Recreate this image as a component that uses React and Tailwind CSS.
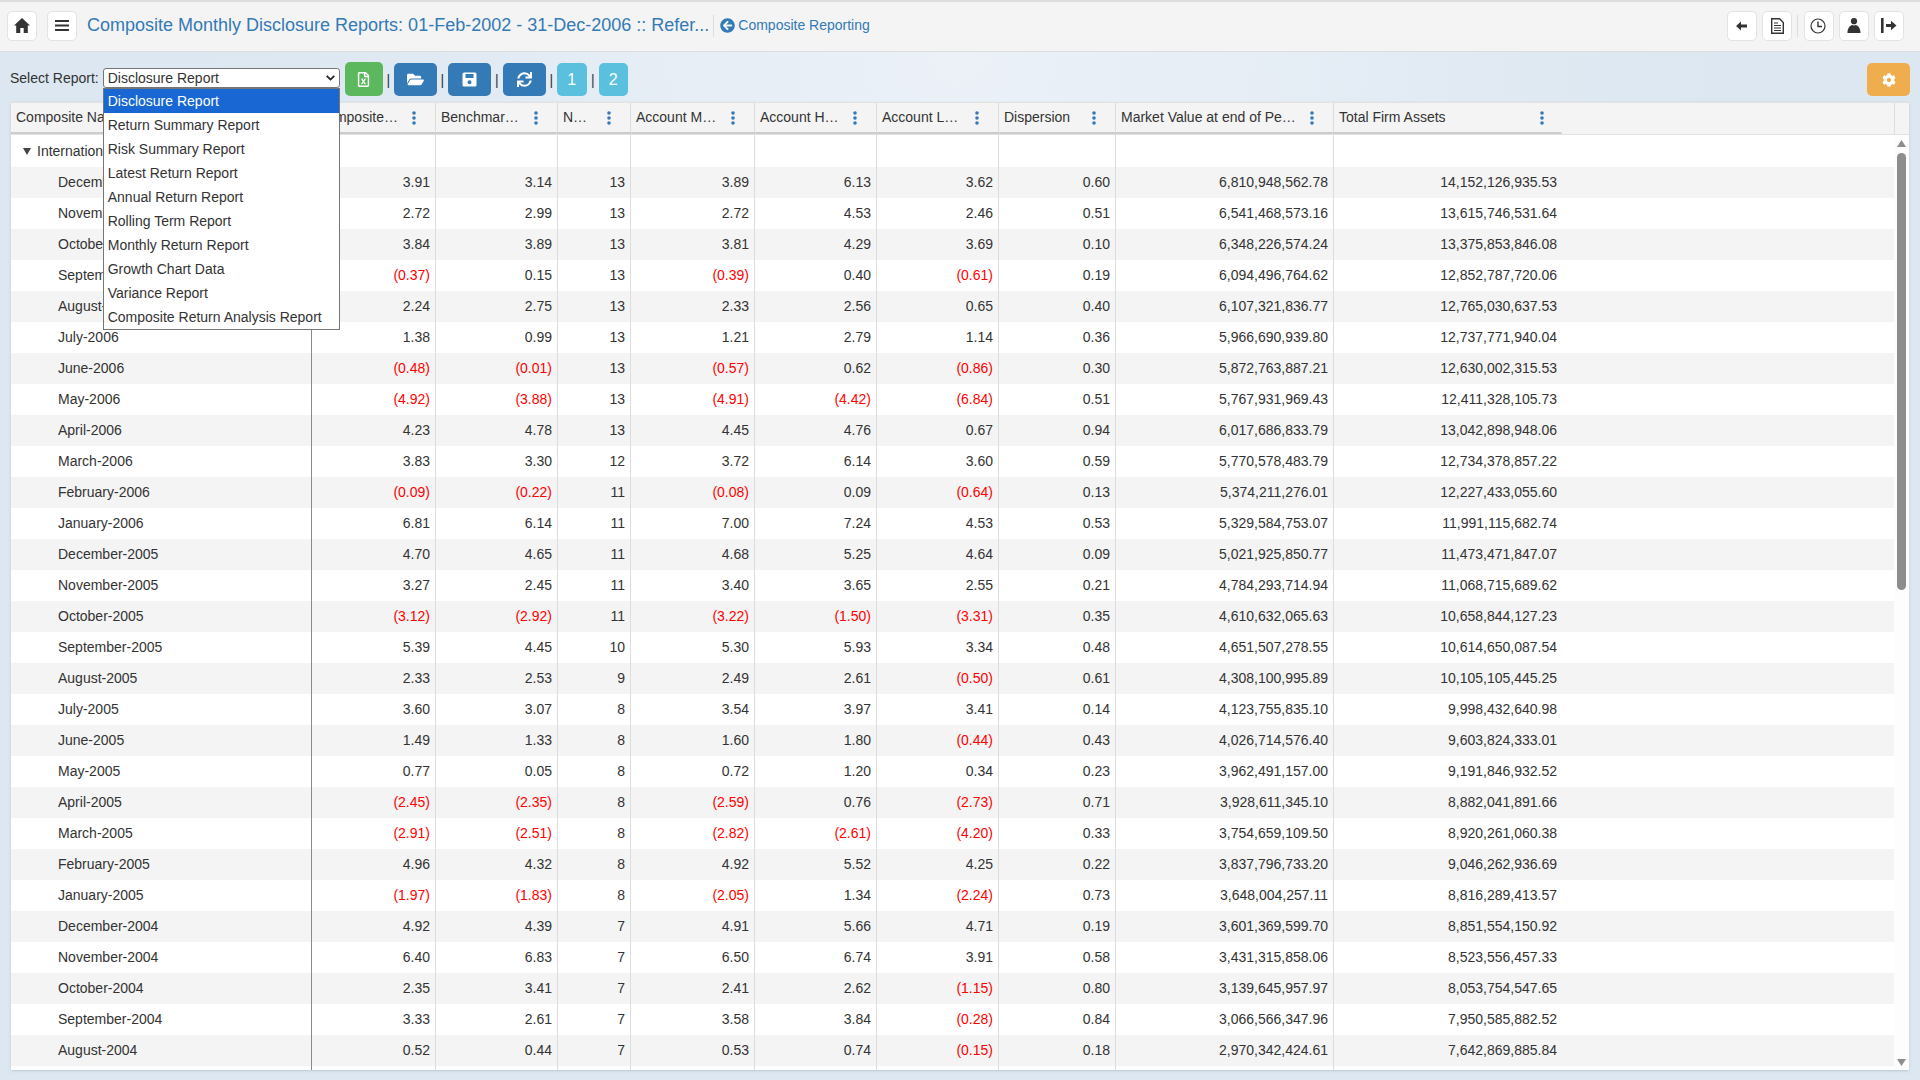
import React from "react";
import { FaArrowCircleLeft, FaRegFileExcel, FaFolderOpen, FaSync, FaCog } from "react-icons/fa";

const reports = [
  "Disclosure Report",
  "Return Summary Report",
  "Risk Summary Report",
  "Latest Return Report",
  "Annual Return Report",
  "Rolling Term Report",
  "Monthly Return Report",
  "Growth Chart Data",
  "Variance Report",
  "Composite Return Analysis Report",
];

const columns = [
  { label: "Composite Name", width: "w-[301px]", border: "border-[#8a8a8a]" },
  { label: "Composite…", width: "w-[124px]", border: "border-[#ddd]" },
  { label: "Benchmar…", width: "w-[122px]", border: "border-[#ddd]" },
  { label: "N…", width: "w-[73px]", border: "border-[#ddd]" },
  { label: "Account M…", width: "w-[124px]", border: "border-[#ddd]" },
  { label: "Account H…", width: "w-[122px]", border: "border-[#ddd]" },
  { label: "Account L…", width: "w-[122px]", border: "border-[#ddd]" },
  { label: "Dispersion", width: "w-[117px]", border: "border-[#ddd]" },
  { label: "Market Value at end of Pe…", width: "w-[218px]", border: "border-[#ddd]" },
  { label: "Total Firm Assets", width: "w-[228px]", border: "border-transparent" },
];

const rows = [
  ["December-2006", "3.91", "3.14", "13", "3.89", "6.13", "3.62", "0.60", "6,810,948,562.78", "14,152,126,935.53"],
  ["November-2006", "2.72", "2.99", "13", "2.72", "4.53", "2.46", "0.51", "6,541,468,573.16", "13,615,746,531.64"],
  ["October-2006", "3.84", "3.89", "13", "3.81", "4.29", "3.69", "0.10", "6,348,226,574.24", "13,375,853,846.08"],
  ["September-2006", "(0.37)", "0.15", "13", "(0.39)", "0.40", "(0.61)", "0.19", "6,094,496,764.62", "12,852,787,720.06"],
  ["August-2006", "2.24", "2.75", "13", "2.33", "2.56", "0.65", "0.40", "6,107,321,836.77", "12,765,030,637.53"],
  ["July-2006", "1.38", "0.99", "13", "1.21", "2.79", "1.14", "0.36", "5,966,690,939.80", "12,737,771,940.04"],
  ["June-2006", "(0.48)", "(0.01)", "13", "(0.57)", "0.62", "(0.86)", "0.30", "5,872,763,887.21", "12,630,002,315.53"],
  ["May-2006", "(4.92)", "(3.88)", "13", "(4.91)", "(4.42)", "(6.84)", "0.51", "5,767,931,969.43", "12,411,328,105.73"],
  ["April-2006", "4.23", "4.78", "13", "4.45", "4.76", "0.67", "0.94", "6,017,686,833.79", "13,042,898,948.06"],
  ["March-2006", "3.83", "3.30", "12", "3.72", "6.14", "3.60", "0.59", "5,770,578,483.79", "12,734,378,857.22"],
  ["February-2006", "(0.09)", "(0.22)", "11", "(0.08)", "0.09", "(0.64)", "0.13", "5,374,211,276.01", "12,227,433,055.60"],
  ["January-2006", "6.81", "6.14", "11", "7.00", "7.24", "4.53", "0.53", "5,329,584,753.07", "11,991,115,682.74"],
  ["December-2005", "4.70", "4.65", "11", "4.68", "5.25", "4.64", "0.09", "5,021,925,850.77", "11,473,471,847.07"],
  ["November-2005", "3.27", "2.45", "11", "3.40", "3.65", "2.55", "0.21", "4,784,293,714.94", "11,068,715,689.62"],
  ["October-2005", "(3.12)", "(2.92)", "11", "(3.22)", "(1.50)", "(3.31)", "0.35", "4,610,632,065.63", "10,658,844,127.23"],
  ["September-2005", "5.39", "4.45", "10", "5.30", "5.93", "3.34", "0.48", "4,651,507,278.55", "10,614,650,087.54"],
  ["August-2005", "2.33", "2.53", "9", "2.49", "2.61", "(0.50)", "0.61", "4,308,100,995.89", "10,105,105,445.25"],
  ["July-2005", "3.60", "3.07", "8", "3.54", "3.97", "3.41", "0.14", "4,123,755,835.10", "9,998,432,640.98"],
  ["June-2005", "1.49", "1.33", "8", "1.60", "1.80", "(0.44)", "0.43", "4,026,714,576.40", "9,603,824,333.01"],
  ["May-2005", "0.77", "0.05", "8", "0.72", "1.20", "0.34", "0.23", "3,962,491,157.00", "9,191,846,932.52"],
  ["April-2005", "(2.45)", "(2.35)", "8", "(2.59)", "0.76", "(2.73)", "0.71", "3,928,611,345.10", "8,882,041,891.66"],
  ["March-2005", "(2.91)", "(2.51)", "8", "(2.82)", "(2.61)", "(4.20)", "0.33", "3,754,659,109.50", "8,920,261,060.38"],
  ["February-2005", "4.96", "4.32", "8", "4.92", "5.52", "4.25", "0.22", "3,837,796,733.20", "9,046,262,936.69"],
  ["January-2005", "(1.97)", "(1.83)", "8", "(2.05)", "1.34", "(2.24)", "0.73", "3,648,004,257.11", "8,816,289,413.57"],
  ["December-2004", "4.92", "4.39", "7", "4.91", "5.66", "4.71", "0.19", "3,601,369,599.70", "8,851,554,150.92"],
  ["November-2004", "6.40", "6.83", "7", "6.50", "6.74", "3.91", "0.58", "3,431,315,858.06", "8,523,556,457.33"],
  ["October-2004", "2.35", "3.41", "7", "2.41", "2.62", "(1.15)", "0.80", "3,139,645,957.97", "8,053,754,547.65"],
  ["September-2004", "3.33", "2.61", "7", "3.58", "3.84", "(0.28)", "0.84", "3,066,566,347.96", "7,950,585,882.52"],
  ["August-2004", "0.52", "0.44", "7", "0.53", "0.74", "(0.15)", "0.18", "2,970,342,424.61", "7,642,869,885.84"],
];

function IconButton({ children }) {
  return (
    <button className="w-[30px] h-[30px] flex items-center justify-center bg-white border border-[#e3e3e3] rounded-[5px] text-[#333]">
      {children}
    </button>
  );
}

function ActionButton({ className, children }) {
  return (
    <button className={`flex items-center justify-center rounded-[5px] text-white text-base ${className}`}>
      {children}
    </button>
  );
}

function Sep({ width }) {
  return <span className={`${width} mt-[8px] text-center text-[14px] leading-5 text-[#333]`}>|</span>;
}

function HeaderDots({ last }) {
  return (
    <svg
      className={`w-[4px] h-[14px] shrink-0 text-[#337ab7] ${last ? "mr-[17px]" : "mr-[19px]"}`}
      viewBox="0 0 4 14"
      fill="currentColor"
    >
      <circle cx="2" cy="2" r="1.8" />
      <circle cx="2" cy="7" r="1.8" />
      <circle cx="2" cy="12" r="1.8" />
    </svg>
  );
}

function TopBar() {
  return (
    <div className="h-[52px] shrink-0 flex items-center pl-[7px] pr-[16px] pb-[2px] bg-[#f4f4f4] border-t-2 border-b border-[#ddd]">
      <IconButton>
        <svg width="16" height="15" viewBox="0 0 16 15" fill="currentColor">
          <path d="M8 0 L16 7.4 H13.8 V15 H9.7 V10 H6.3 V15 H2.2 V7.4 H0 Z" />
        </svg>
      </IconButton>
      <div className="w-[10px]" />
      <IconButton>
        <svg width="14" height="11" viewBox="0 0 14 11" fill="currentColor">
          <rect y="0" width="14" height="2" />
          <rect y="4.5" width="14" height="2" />
          <rect y="9" width="14" height="2" />
        </svg>
      </IconButton>
      <h1 className="ml-[10px] text-[18px] font-normal text-[#337ab7] whitespace-nowrap">
        Composite Monthly Disclosure Reports: 01-Feb-2002 - 31-Dec-2006 :: Refer...
      </h1>
      <div className="ml-[4px] h-[22px] border-l border-[#ddd]" />
      <a className="ml-[6px] flex items-center gap-[3px] text-[14px] text-[#337ab7]">
        <FaArrowCircleLeft size={15} />
        Composite Reporting
      </a>
      <div className="ml-auto flex items-center">
        <IconButton>
          <svg width="12" height="10" viewBox="0 0 12 10" fill="currentColor">
            <path d="M0 5 L5 0.5 V3.5 H11 V6.5 H5 V9.5 Z" />
          </svg>
        </IconButton>
        <div className="w-[5px]" />
        <IconButton>
          <svg width="13" height="16" viewBox="0 0 13 16">
            <path d="M0.7 0.7 H8.5 L12.3 4.5 V15.3 H0.7 Z" fill="none" stroke="currentColor" strokeWidth="1.4" />
            <path d="M3 5 H7 M3 7.5 H10 M3 10 H10 M3 12.5 H10" stroke="currentColor" strokeWidth="1.2" />
          </svg>
        </IconButton>
        <div className="ml-[5px] mr-[6px] h-[22px] border-l border-[#ddd]" />
        <IconButton>
          <svg className="mr-[2px]" width="16" height="16" viewBox="0 0 16 16" fill="none" stroke="currentColor">
            <circle cx="8" cy="8" r="7" strokeWidth="1.2" />
            <path d="M8 3.5 V8.5 H12" strokeWidth="1.4" />
          </svg>
        </IconButton>
        <div className="w-[5px]" />
        <IconButton>
          <svg width="14" height="15" viewBox="0 0 14 15" fill="currentColor">
            <circle cx="7" cy="3.2" r="3.1" />
            <path d="M0.5 15 C0.5 9.5 3.5 7.4 5.2 7 C6 7.6 8 7.6 8.8 7 C10.5 7.4 13.5 9.5 13.5 15 Z" />
          </svg>
        </IconButton>
        <div className="w-[5px]" />
        <IconButton>
          <svg width="16" height="15" viewBox="0 0 16 15" fill="currentColor">
            <rect x="0" y="0" width="2.6" height="15" />
            <path d="M5 6 H10 V2.8 L15.5 7.5 L10 12.2 V9 H5 Z" />
          </svg>
        </IconButton>
      </div>
    </div>
  );
}

function ReportSelect() {
  return (
    <div className="relative ml-[4px] mt-[6px] w-[237px] h-[20px]">
      <div className="h-full flex items-center justify-between pl-[4px] pr-[4px] bg-white border border-[#767676] rounded-[3px] text-[14px] text-[#333]">
        {reports[0]}
        <svg width="9" height="6" viewBox="0 0 9 6" fill="none" stroke="#222" strokeWidth="1.8">
          <path d="M0.7 0.8 L4.5 4.6 L8.3 0.8" />
        </svg>
      </div>
      <ul className="absolute z-10 left-0 top-[20px] w-full bg-white border border-[#767676] text-[14px] text-[#333]">
        {reports.map((r, i) => (
          <li
            key={r}
            className={
              i === 0
                ? "h-[24px] leading-[24px] pl-[4px] bg-[#1967d2] text-white"
                : "h-[24px] leading-[24px] pl-[4px]"
            }
          >
            {r}
          </li>
        ))}
      </ul>
    </div>
  );
}

function Toolbar() {
  return (
    <div className="h-[50px] shrink-0 flex items-start pt-[10px] pl-[10px] pr-[10px]">
      <label className="mt-[6px] text-[14px] leading-5 text-[#333]">Select Report:</label>
      <ReportSelect />
      <ActionButton className="ml-[5px] w-[38px] h-[34px] bg-[#5cb85c]">
        <FaRegFileExcel size={15} />
      </ActionButton>
      <Sep width="w-[11px]" />
      <ActionButton className="mt-px w-[43px] h-[33px] bg-[#337ab7]">
        <FaFolderOpen size={17} />
      </ActionButton>
      <Sep width="w-[11px]" />
      <ActionButton className="mt-px w-[43px] h-[33px] bg-[#337ab7]">
        <svg width="15" height="15" viewBox="0 0 15 15" fill="currentColor">
          <path d="M2 0.5 H13 Q14.5 0.5 14.5 2 V13 Q14.5 14.5 13 14.5 H2 Q0.5 14.5 0.5 13 V2 Q0.5 0.5 2 0.5 Z M3.5 2 V6 H11.5 V2 Z M7.5 8.3 A2 2 0 1 0 7.5 12.3 A2 2 0 1 0 7.5 8.3 Z" fillRule="evenodd" />
        </svg>
      </ActionButton>
      <Sep width="w-[12px]" />
      <ActionButton className="mt-px w-[43px] h-[33px] bg-[#337ab7]">
        <FaSync size={15} />
      </ActionButton>
      <Sep width="w-[11px]" />
      <ActionButton className="mt-px w-[30px] h-[33px] bg-[#5bc0de]">1</ActionButton>
      <Sep width="w-[12px]" />
      <ActionButton className="mt-px w-[29px] h-[33px] bg-[#5bc0de]">2</ActionButton>
      <ActionButton className="ml-auto mt-px w-[43px] h-[33px] bg-[#f0ad4e]">
        <FaCog size={14} />
      </ActionButton>
    </div>
  );
}

function HeaderRow() {
  return (
    <div className="h-[33px] shrink-0 flex bg-[#f4f4f4] border-t border-b border-[#e2e2e2]">
      {columns.map((c, i) => (
        <div
          key={c.label}
          className={`${c.width} shrink-0 flex items-center justify-between pl-[5px] border-r border-b-2 border-b-[#ccc] ${i === 0 ? "border-r-[#ddd]" : c.border} text-[14px] text-[#333] whitespace-nowrap`}
        >
          {c.label}
          <HeaderDots last={i === 9} />
        </div>
      ))}
      <div className="flex-1" />
      <div className="w-[15px] border-l border-[#ddd]" />
    </div>
  );
}

function Row({ cells, shaded }) {
  return (
    <div className={`h-[31px] flex text-[14px] text-[#333] ${shaded ? "bg-[#f4f4f4]" : ""}`}>
      {columns.map((c, i) => {
        const value = cells[i];
        if (i === 0) {
          return (
            <div key={c.label} className={`${c.width} shrink-0 flex items-center pl-[47px] border-r ${c.border}`}>
              {value}
            </div>
          );
        }
        return (
          <div
            key={c.label}
            className={`${c.width} shrink-0 flex items-center justify-end border-r ${c.border} ${i === 9 ? "pr-[4px]" : "pr-[5px]"} ${value.startsWith("(") ? "text-[#f00]" : ""}`}
          >
            {value}
          </div>
        );
      })}
    </div>
  );
}

function Scrollbar() {
  return (
    <div className="w-[15px] shrink-0 bg-[#fdfdfd] flex flex-col items-center pt-[5px] pb-[4px]">
      <svg width="9" height="7" viewBox="0 0 9 7" fill="#8d8d8d">
        <path d="M4.5 0 L9 7 H0 Z" />
      </svg>
      <div className="mt-[6px] w-[9px] h-[437px] rounded-full bg-[#8d8d8d]" />
      <svg className="mt-auto" width="9" height="7" viewBox="0 0 9 7" fill="#8d8d8d">
        <path d="M0 0 H9 L4.5 7 Z" />
      </svg>
    </div>
  );
}

function ReportTable() {
  return (
    <div className="flex-1 min-h-0 mx-[11px] mb-[10px] flex flex-col bg-white shadow-sm">
      <HeaderRow />
      <div className="flex-1 min-h-0 flex">
        <div className="flex-1 flex flex-col">
          <div className="h-[32px] flex text-[14px] text-[#333]">
            {columns.map((c, i) => (
              <div
                key={c.label}
                className={`${c.width} shrink-0 flex items-center border-r ${c.border}`}
              >
                {i === 0 && (
                  <span className="pl-[12px] flex items-center gap-[6px]">
                    <svg width="8" height="7" viewBox="0 0 8 7" fill="#444">
                      <path d="M0 0 H8 L4 7 Z" />
                    </svg>
                    International Equity
                  </span>
                )}
              </div>
            ))}
          </div>
          {rows.map((cells, i) => (
            <Row key={cells[0]} cells={cells} shaded={i % 2 === 0} />
          ))}
          <div className="flex-1 flex">
            {columns.map((c) => (
              <div key={c.label} className={`${c.width} shrink-0 border-r ${c.border}`} />
            ))}
          </div>
        </div>
        <Scrollbar />
      </div>
    </div>
  );
}

export default function App() {
  return (
    <div className="h-screen flex flex-col overflow-hidden font-['Liberation_Sans',Arial,sans-serif] bg-[radial-gradient(ellipse_at_50%_50px,#ecf1f8,#dce7f1_55%)]">
      <TopBar />
      <Toolbar />
      <ReportTable />
    </div>
  );
}
